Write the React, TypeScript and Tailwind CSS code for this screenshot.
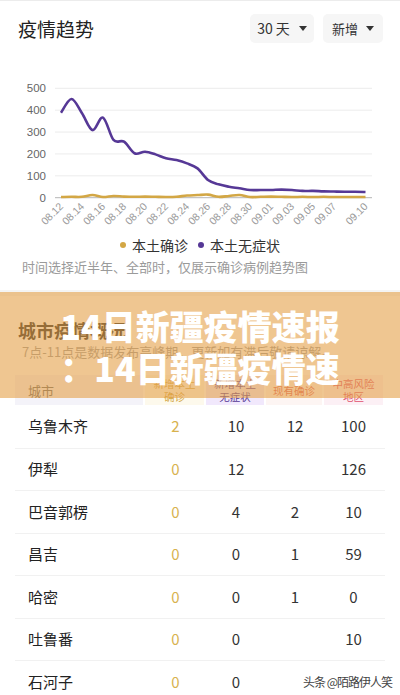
import React from "react";

const purple = [388, 451, 386, 309, 366, 264, 256, 203, 210, 198, 180, 172, 157, 134, 81, 61, 50, 43, 35, 35, 35, 37, 35, 31, 31, 29, 28, 27, 27, 26];
const gold = [3, 4, 4, 12, 3, 8, 5, 4, 5, 4, 3, 4, 10, 12, 14, 4, 8, 12, 3, 4, 5, 4, 3, 4, 3, 4, 3, 3, 3, 3];

const X0 = 61;
const DX = (365.5 - 61) / 29;
const Y0 = 197.7;
const K = (197.7 - 88.3) / 500;

function px(i: number) {
  return X0 + i * DX;
}
function py(v: number) {
  return Y0 - v * K;
}

function smoothPath(data: number[]) {
  const pts = data.map((v, i) => [px(i), py(v)]);
  let d = `M${pts[0][0].toFixed(2)},${pts[0][1].toFixed(2)}`;
  for (let i = 0; i < pts.length - 1; i++) {
    const p0 = pts[i - 1] || pts[i];
    const p1 = pts[i];
    const p2 = pts[i + 1];
    const p3 = pts[i + 2] || p2;
    const c1x = p1[0] + (p2[0] - p0[0]) / 6;
    const c1y = p1[1] + (p2[1] - p0[1]) / 6;
    const c2x = p2[0] - (p3[0] - p1[0]) / 6;
    const c2y = p2[1] - (p3[1] - p1[1]) / 6;
    d += ` C${c1x.toFixed(2)},${c1y.toFixed(2)} ${c2x.toFixed(2)},${c2y.toFixed(2)} ${p2[0].toFixed(2)},${p2[1].toFixed(2)}`;
  }
  return d;
}

const labels: [number, string][] = [
  [0, "08.12"],
  [2, "08.14"],
  [4, "08.16"],
  [6, "08.18"],
  [8, "08.20"],
  [10, "08.22"],
  [12, "08.24"],
  [14, "08.26"],
  [16, "08.28"],
  [18, "08.30"],
  [20, "09.01"],
  [22, "09.03"],
  [24, "09.05"],
  [26, "09.07"],
  [29, "09.10"],
];

function Chart() {
  const ticks = [0, 100, 200, 300, 400, 500];
  return (
    <svg width="400" height="192" viewBox="0 43 400 192" className="block">
      {ticks.map((t) => (
        <g key={t}>
          <line
            x1="55"
            x2="372"
            y1={py(t)}
            y2={py(t)}
            stroke={t === 0 ? "#b5b5b5" : "#ececec"}
            strokeWidth="1"
          />
          <text
            x="46"
            y={py(t) + 4}
            textAnchor="end"
            fontSize="11.5"
            fill="#666"
            fontFamily="'Liberation Sans', Arial, sans-serif"
          >
            {t}
          </text>
        </g>
      ))}
      {labels.map(([i, l]) => (
        <text
          key={l}
          x={px(i) + 3}
          y={207}
          textAnchor="end"
          fontSize="10.5"
          fill="#9a9a9a"
          fontFamily="'Liberation Sans', Arial, sans-serif"
          transform={`rotate(-45 ${px(i) + 3} 207)`}
        >
          {l}
        </text>
      ))}
      <path d={smoothPath(gold)} fill="none" stroke="#d3a745" strokeWidth="2.6" strokeLinejoin="round" />
      <path d={smoothPath(purple)} fill="none" stroke="#563896" strokeWidth="2.6" strokeLinejoin="round" />
    </svg>
  );
}

function Caret() {
  return (
    <svg width="8" height="5" viewBox="0 0 8 5" className="block">
      <path d="M0 0 L8 0 L4 5 Z" fill="#333" />
    </svg>
  );
}

const rows: [string, string, string, string, string][] = [
  ["乌鲁木齐", "2", "10", "12", "100"],
  ["伊犁", "0", "12", "", "126"],
  ["巴音郭楞", "0", "4", "2", "10"],
  ["昌吉", "0", "0", "1", "59"],
  ["哈密", "0", "0", "1", "0"],
  ["吐鲁番", "0", "0", "", "10"],
  ["石河子", "0", "0", "", ""],
];

export default function App() {
  return (
    <div
      className="relative w-[400px] h-[695px] overflow-hidden bg-white text-[#222]"
      style={{ fontFamily: "'Noto Sans CJK SC', 'Noto Sans', sans-serif" }}
    >
      {/* Card 1 */}
      <div className="h-[290px] bg-white border-t border-[#ececec]">
        <div className="flex items-center justify-between pl-[18px] pr-[17px] pt-[13px]">
          <div className="text-[19px] leading-[29px] text-[#222]">疫情趋势</div>
          <div className="flex gap-[9px]">
            <div className="flex h-[29px] w-[64px] items-center justify-center gap-[9px] rounded-[5px] bg-[#f6f6f6] text-[14px] text-[#333]">
              <span>30 天</span>
              <Caret />
            </div>
            <div className="flex h-[29px] w-[60px] items-center justify-center gap-[8px] rounded-[5px] bg-[#f6f6f6] text-[13px] text-[#333]">
              <span>新增</span>
              <Caret />
            </div>
          </div>
        </div>
        <Chart />
        <div className="flex h-[20px] items-center justify-center text-[14px] text-[#333]">
          <div className="flex items-center">
            <span className="mr-[6px] h-[6px] w-[6px] rounded-full bg-[#d3a745]" />
            <span>本土确诊</span>
          </div>
          <div className="ml-[10px] flex items-center">
            <span className="mr-[6px] h-[6px] w-[6px] rounded-full bg-[#563896]" />
            <span>本土无症状</span>
          </div>
        </div>
        <div className="mt-[3px] pl-[22px] text-[13px] leading-[18px] text-[#9a9a9a]">
          时间选择近半年、全部时，仅展示确诊病例趋势图
        </div>
      </div>
      <div className="h-[6px] bg-[#f4f4f4]" />
      {/* Card 2 */}
      <div className="bg-white pt-[22px]">
        <div className="pl-[18px] text-[18px] font-bold leading-[24px] text-[#222]">城市疫情概况</div>
        <div className="mt-[1px] pl-[22px] text-[13px] leading-[18px] text-[#9a9a9a]">
          7点-11点是数据发布高峰期，更新如有滞后敬请谅解。
        </div>
        <div className="mx-[15px] mt-[14px]">
          <div className="flex h-[30px] gap-[2px] text-[10.5px] leading-[13px]">
            <div className="flex w-[128px] items-center bg-[#f4f3f9] pl-[13px] text-[13px] text-[#666]">城市</div>
            <div className="flex w-[59px] items-center justify-center bg-[#fdf9ec] text-center text-[#d3a745]">
              新增本土
              <br />
              确诊
            </div>
            <div className="flex w-[58px] items-center justify-center bg-[#f1e8fc] text-center text-[#563896]">
              新增本土
              <br />
              无症状
            </div>
            <div className="flex w-[56px] items-center justify-center bg-[#fdf5f3] text-center text-[#e0605a]">
              现有确诊
            </div>
            <div className="flex w-[59px] items-center justify-center bg-[#fcf0f5] text-center text-[#e0506e]">
              中高风险
              <br />
              地区
            </div>
          </div>
          {rows.map((r, idx) => (
            <div
              key={r[0]}
              className={`flex items-center border-b border-[#f1f1f1] text-[15px] ${idx === 0 ? "h-[43.5px]" : "h-[42.5px]"}`}
            >
              <div className="w-[130px] pl-[13px] text-[#222]">{r[0]}</div>
              <div className="w-[61px] text-center text-[#d8b24e]">{r[1]}</div>
              <div className="w-[60px] text-center text-[#333]">{r[2]}</div>
              <div className="w-[58px] text-center text-[#333]">{r[3]}</div>
              <div className="w-[59px] text-center text-[#333]">{r[4]}</div>
            </div>
          ))}
        </div>
      </div>

      {/* Overlay banner */}
      <div className="absolute left-0 right-0 top-[292px] h-[106px] bg-[rgba(228,160,72,0.6)] pt-[13px] text-center text-[34px] font-black leading-[42px] text-white">
        <div>14日新疆疫情速报</div>
        <div>：14日新疆疫情速</div>
      </div>

      {/* Watermark */}
      <div
        className="absolute bottom-[6px] right-[8px] text-[12px] leading-[14px] tracking-[-1px] text-[#444]"
        style={{ textShadow: "0 0 2px #fff, 0 0 2px #fff" }}
      >
        头条 @陌路伊人笑
      </div>
    </div>
  );
}
